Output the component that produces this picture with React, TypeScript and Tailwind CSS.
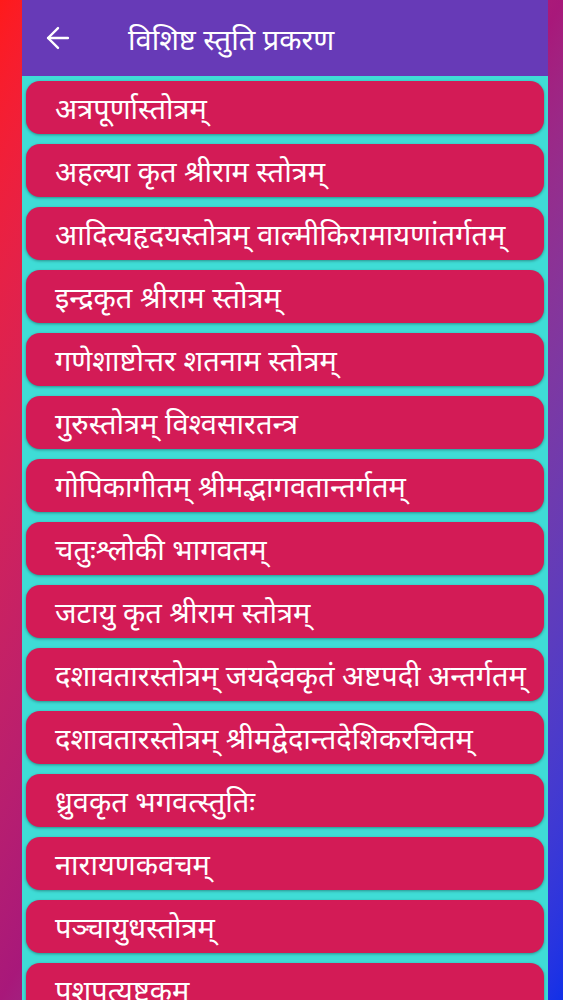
import { ArrowLeft } from 'lucide-react'

const items = [
  'अत्रपूर्णास्तोत्रम्',
  'अहल्या कृत श्रीराम स्तोत्रम्',
  'आदित्यहृदयस्तोत्रम् वाल्मीकिरामायणांतर्गतम्',
  'इन्द्रकृत श्रीराम स्तोत्रम्',
  'गणेशाष्टोत्तर शतनाम स्तोत्रम्',
  'गुरुस्तोत्रम् विश्वसारतन्त्र',
  'गोपिकागीतम् श्रीमद्भागवतान्तर्गतम्',
  'चतुःश्लोकी भागवतम्',
  'जटायु कृत श्रीराम स्तोत्रम्',
  'दशावतारस्तोत्रम् जयदेवकृतं अष्टपदी अन्तर्गतम्',
  'दशावतारस्तोत्रम् श्रीमद्वेदान्तदेशिकरचितम्',
  'ध्रुवकृत भगवत्स्तुतिः',
  'नारायणकवचम्',
  'पञ्चायुधस्तोत्रम्',
  'पशुपत्यष्टकम',
]

export default function App() {
  return (
    <div
      className="h-[1000px] w-[563px] overflow-hidden bg-gradient-to-br from-[#ff1a1a] via-[#a8187a] to-[#1030e8] pl-[22px] pr-[15px]"
      style={{ fontFamily: '"Noto Sans", "Noto Sans Devanagari", Lato, sans-serif' }}
    >
      <div className="flex h-full flex-col bg-[#3fdcd6]">
        <div className="flex h-[76px] shrink-0 items-center bg-[#673ab7] pl-[19px] text-white">
          <ArrowLeft className="h-[34px] w-[34px]" strokeWidth={1.7} />
          <h1 className="ml-[53px] text-[29px] leading-none">विशिष्ट स्तुति प्रकरण</h1>
        </div>
        <div className="flex flex-col gap-[10px] px-[4px] pt-[5px]">
          {items.map((t) => (
            <button
              key={t}
              className="flex h-[53px] shrink-0 items-center whitespace-nowrap rounded-[14px] bg-[#d31b56] pl-[29px] text-left text-[29px] leading-none text-white shadow-[0_1px_3px_rgba(0,0,0,0.35)]"
            >
              {t}
            </button>
          ))}
        </div>
      </div>
    </div>
  )
}
